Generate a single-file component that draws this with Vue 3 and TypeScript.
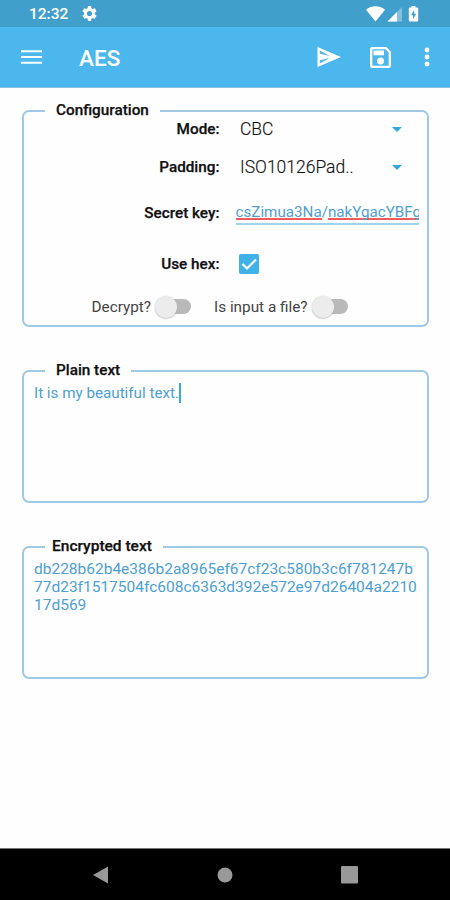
<script setup lang="ts">
import { ref } from 'vue'

interface Choice {
  label: string
  value: string
}

interface Toggle {
  label: string
  kind: string
}

const title = ref('AES')
const choices: Choice[] = [
  { label: 'Mode:', value: 'CBC' },
  { label: 'Padding:', value: 'ISO10126Pad..' },
]
const toggles: Toggle[] = [
  { label: 'Decrypt?', kind: 'decrypt' },
  { label: 'Is input a file?', kind: 'file' },
]
const keyParts: string[] = ['csZimua3Na', '/', 'nakYgacYBFg']
const plainText = ref('It is my beautiful text.')
const encryptedLines: string[] = [
  'db228b62b4e386b2a8965ef67cf23c580b3c6f781247b',
  '77d23f1517504fc608c6363d392e572e97d26404a2210',
  '17d569',
]
</script>

<template>
  <div class="screen">
    <header class="status">
      <span class="clock">12:32</span>
      <svg class="gear" viewBox="0 0 24 24">
        <path fill-rule="evenodd" d="M19.4 13a7.600 7.600 0 0 0 0-2l2.300-1.700a.5.5 0 0 0 .1-.700l-2.200-3.700a.5.5 0 0 0-.600-.2l-2.700 1a8 8 0 0 0-1.700-1L14.200 1.900a.5.5 0 0 0-.5-.4h-3.400a.5.5 0 0 0-.5.400L9.400 4.700a8 8 0 0 0-1.700 1L5 4.700a.5.5 0 0 0-.600.2L2.200 8.600a.5.5 0 0 0 .1.700L4.600 11a7.600 7.600 0 0 0 0 2l-2.300 1.700a.5.5 0 0 0-.1.700l2.200 3.700c.1.200.400.300.600.2l2.700-1a8 8 0 0 0 1.700 1l.400 2.800c0 .2.200.400.5.400h3.400c.3 0 .5-.2.5-.4l.400-2.800a8 8 0 0 0 1.700-1l2.700 1c.2.100.5 0 .600-.2l2.200-3.700a.5.5 0 0 0-.1-.700zM12 15.600a3.600 3.600 0 1 1 0-7.200 3.600 3.600 0 0 1 0 7.200z" />
      </svg>
      <svg class="signals" viewBox="0 0 54 18">
        <path d="M0 4.800C5.500.200 13.500.200 19 4.800L9.500 16.500z" />
        <path d="M36 2v14.500H21.500z" opacity=".35" />
        <path d="M31 7v9.500h-9.500z" />
        <path fill-rule="evenodd" d="M45.500 1h4v1.500h1.700q1 0 1 1v12q0 1-1 1h-7.400q-1 0-1-1v-12q0-1 1-1h1.700zM48.200 4.800l-3.200 5.500h2v4l3.200-5.600h-2z" />
      </svg>
    </header>

    <nav class="appbar">
      <svg class="menu" viewBox="0 0 22 16"><path d="M0 1h22v2H0zM0 7h22v2H0zM0 13h22v2H0z" /></svg>
      <h1>{{ title }}</h1>
      <svg class="send" viewBox="0 0 24 20">
        <path fill-rule="evenodd" d="M.5 0L24 10 .5 20zM2.800 3.500v3.300l10 2.200zM2.800 13.200v3.300l10-5.500z" />
      </svg>
      <svg class="save" viewBox="3 3 18 18">
        <path d="M17 3H5a2 2 0 0 0-2 2v14a2 2 0 0 0 2 2h14a2 2 0 0 0 2-2V7zm2 16H5V5h11.200L19 7.800zm-7-7a3 3 0 1 0 0 6 3 3 0 0 0 0-6zM6 6h9v4H6z" />
      </svg>
      <svg class="more" viewBox="0 0 6 20"><circle cx="3" cy="3" r="2.400" /><circle cx="3" cy="10" r="2.400" /><circle cx="3" cy="17" r="2.400" /></svg>
    </nav>

    <main>
      <section class="box config">
        <h2>Configuration</h2>
        <div v-for="c in choices" :key="c.label" class="row choice">
          <span class="label">{{ c.label }}</span>
          <span class="value">{{ c.value }}</span>
          <svg class="arrow" viewBox="0 0 10 5"><path d="M0 0h10L5 5z" /></svg>
        </div>
        <div class="row secret">
          <span class="label">Secret key:</span>
          <div class="field">
            <span v-for="p in keyParts" :key="p" :class="{ misspelt: p !== '/' }">{{ p }}</span>
          </div>
        </div>
        <div class="row hex">
          <span class="label">Use hex:</span>
          <span class="check"><svg viewBox="0 0 20 20"><path d="M3.500 10l4.500 4.500L17 5.500" /></svg></span>
        </div>
        <div class="toggles">
          <div v-for="t in toggles" :key="t.kind" :class="['toggle', t.kind]">
            <span class="toggle-label">{{ t.label }}</span>
            <span class="switch"><span class="thumb"></span></span>
          </div>
        </div>
      </section>

      <section class="box plain">
        <h2>Plain text</h2>
        <p><span class="typed">{{ plainText }}</span><span class="caret"></span></p>
      </section>

      <section class="box encrypted">
        <h2>Encrypted text</h2>
        <p><span v-for="l in encryptedLines" :key="l" class="line">{{ l }}</span></p>
      </section>
    </main>

    <footer>
      <svg viewBox="0 0 16 18"><path d="M15.500.5v17L.5 9z" /></svg>
      <svg class="home" viewBox="0 0 16 16"><circle cx="8" cy="8" r="7.500" /></svg>
      <svg class="recent" viewBox="0 0 17 18"><rect width="17" height="17.500" rx="1" /></svg>
    </footer>
  </div>
</template>

<style>
body {
  margin: 0;
  background: #fff;
}
</style>

<style scoped>
.screen {
  width: 450px;
  height: 900px;
  display: flex;
  flex-direction: column;
  overflow: hidden;
  background: #fefefe;
  font-family: Roboto, "Liberation Sans", sans-serif;
  color: #111;
}
svg {
  display: block;
  flex: none;
  fill: #fff;
}
.status {
  box-sizing: border-box;
  height: 27px;
  padding: 0 30px 0 29px;
  display: flex;
  align-items: center;
  background: #419fcc;
}
.clock {
  width: 52px;
  font-size: 15.500px;
  font-weight: 500;
  line-height: 28px;
  color: #fff;
}
.gear {
  width: 17px;
  height: 17px;
}
.signals {
  width: 54px;
  height: 18px;
  margin-left: auto;
}
.appbar {
  box-sizing: border-box;
  height: 61px;
  padding: 0 20px 0 21px;
  display: flex;
  align-items: center;
  background: #4cb7ec;
  border-bottom: 1px solid #83c3e8;
}
.menu {
  width: 21px;
  height: 16px;
}
h1 {
  flex: 1;
  margin: 2px 0 0 37px;
  font-size: 22.500px;
  font-weight: 500;
  color: #fff;
}
.send {
  width: 24px;
  height: 20px;
  margin-right: 29px;
}
.save {
  width: 21px;
  height: 21px;
  margin-right: 33px;
}
.more {
  width: 6px;
  height: 20px;
}
main {
  flex: 1;
  display: flex;
  flex-direction: column;
  gap: 43px;
  padding: 22px 21px 0 22px;
}
.box {
  box-sizing: border-box;
  border: 2px solid #a0cae3;
  border-radius: 7px;
  height: 133px;
}
.config {
  height: 217px;
}
h2 {
  box-sizing: border-box;
  width: max-content;
  height: 20px;
  margin: -12px 0 0 21px;
  padding: 0 11px;
  background: #fefefe;
  font-size: 15.300px;
  font-weight: 500;
  line-height: 20px;
  -webkit-text-stroke: 0.250px #111;
}
.encrypted h2 {
  padding-left: 7px;
  font-size: 15.500px;
}
.row {
  display: grid;
  grid-template-columns: 195.500px 1fr;
  align-items: center;
}
.choice {
  grid-template-columns: 195.500px 172.500px 10px;
  height: 38px;
}
.config h2 + .choice {
  margin-top: -10px;
}
.label {
  text-align: right;
  font-size: 15.300px;
  font-weight: 500;
  -webkit-text-stroke: 0.250px #111;
}
.value {
  padding-left: 20.500px;
  font-size: 17.500px;
  font-weight: 300;
  -webkit-text-stroke: 0.150px #222;
}
.arrow {
  width: 10px;
  height: 5px;
  fill: #2fa9df;
}
.secret {
  height: 53px;
}
.field {
  box-sizing: border-box;
  width: 183px;
  height: 22px;
  margin: 2px 0 0 16px;
  display: flex;
  overflow: hidden;
  white-space: nowrap;
  font-size: 15.200px;
  line-height: 18px;
  color: #509fd2;
  border-bottom: 2px solid #a0d3ee;
}
.field span {
  flex: none;
  height: 15px;
}
.misspelt {
  border-bottom: 2px solid #f15a5c;
}
.hex {
  height: 49px;
}
.check {
  width: 20px;
  height: 20px;
  margin-left: 19px;
  border-radius: 2px;
  background: #3fb2e8;
}
.check path {
  fill: none;
  stroke: #fff;
  stroke-width: 2.200;
}
.toggles {
  display: flex;
  gap: 23px;
  padding-left: 67.500px;
  height: 37px;
}
.toggle {
  display: flex;
  align-items: center;
}
.toggle-label {
  font-size: 15.300px;
  color: #444;
}
.switch {
  width: 31px;
  height: 15px;
  margin-left: 9px;
  border-radius: 8px;
  background: #b9b9b9;
  display: flex;
  align-items: center;
}
.thumb {
  flex: none;
  width: 22px;
  height: 22px;
  margin-left: -5px;
  border-radius: 50%;
  background: #ececec;
  box-shadow: 0 0.500px 1.500px #aaa;
}
p {
  margin: 4px 0 0 10px;
  font-size: 15.500px;
  line-height: 18px;
  color: #4da0d3;
}
.plain p {
  display: flex;
  align-items: center;
  margin-top: 3px;
  font-size: 15.200px;
}
.caret {
  width: 2px;
  height: 20px;
  background: #36a9df;
}
.line {
  display: block;
  width: max-content;
}
footer {
  box-sizing: border-box;
  height: 52px;
  padding: 0 92px;
  display: flex;
  justify-content: space-between;
  align-items: center;
  background: #000;
  border-top: 1px solid #777;
}
footer svg {
  width: 17px;
  height: 18px;
  fill: #999;
}
footer .home {
  width: 16px;
  height: 16px;
}
</style>
